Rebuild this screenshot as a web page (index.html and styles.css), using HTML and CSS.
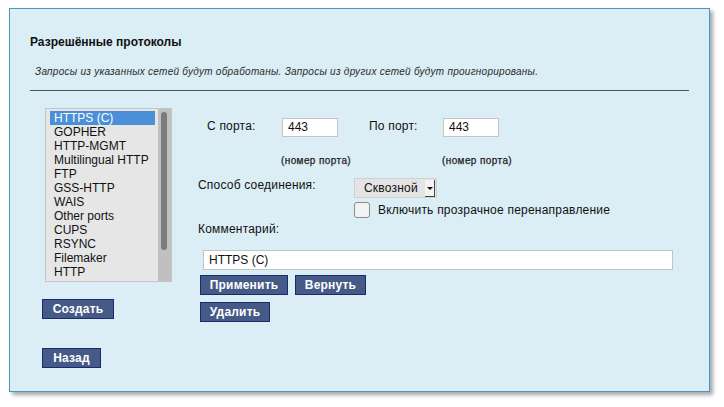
FILE: index.html
```html
<!DOCTYPE html>
<html lang="ru">
<head>
<meta charset="utf-8">
<title>Разрешённые протоколы</title>
<link rel="stylesheet" href="styles.css">
</head>
<body>
<div class="panel">
  <h1 class="title">Разрешённые протоколы</h1>
  <p class="note">Запросы из указанных сетей будут обработаны. Запросы из других сетей будут проигнорированы.</p>
  <div class="rule"></div>
  <div class="main">
    <div class="left">
      <div class="listbox">
        <ul class="list">
          <li class="item selected">HTTPS (C)</li>
          <li class="item">GOPHER</li>
          <li class="item">HTTP-MGMT</li>
          <li class="item">Multilingual HTTP</li>
          <li class="item">FTP</li>
          <li class="item">GSS-HTTP</li>
          <li class="item">WAIS</li>
          <li class="item">Other ports</li>
          <li class="item">CUPS</li>
          <li class="item">RSYNC</li>
          <li class="item">Filemaker</li>
          <li class="item">HTTP</li>
        </ul>
        <div class="scrollbar"><div class="thumb"></div></div>
      </div>
      <button class="btn btn-create">Создать</button>
      <button class="btn btn-back">Назад</button>
    </div>
    <div class="right">
      <div class="ports">
        <span class="lbl">С порта:</span>
        <span class="field small">443</span>
        <span class="lbl">По порт:</span>
        <span class="field small">443</span>
        <span></span>
        <span class="hint">(номер порта)</span>
        <span></span>
        <span class="hint">(номер порта)</span>
      </div>
      <div class="mode">
        <span class="lbl">Способ соединения:</span>
        <div class="mode-ctrls">
          <div class="select"><span class="select-text">Сквозной</span><span class="arrow"></span></div>
          <div class="check-row"><span class="checkbox"></span><span class="check-lbl">Включить прозрачное перенаправление</span></div>
        </div>
      </div>
      <div class="lbl comment-lbl">Комментарий:</div>
      <div class="field wide">HTTPS (C)</div>
      <div class="btn-row">
        <button class="btn btn-apply">Применить</button>
        <button class="btn btn-revert">Вернуть</button>
      </div>
      <div class="btn-row">
        <button class="btn btn-delete">Удалить</button>
      </div>
    </div>
  </div>
</div>
</body>
</html>
```
FILE: styles.css
```css
html, body {
  margin: 0;
  padding: 0;
  background: #ffffff;
}
body {
  font-family: "Liberation Sans", Arial, sans-serif;
  color: #1a1a1a;
  width: 724px;
  height: 407px;
  overflow: hidden;
}
.panel {
  box-sizing: border-box;
  margin: 8px 0 0 9px;
  width: 701px;
  height: 384px;
  background: #dbedf5;
  border: 1px solid #3f9ac4;
  box-shadow: 3px 3px 4px rgba(0, 0, 0, 0.35);
  padding: 26px 0 0 0;
}
.title {
  margin: 0 0 0 20px;
  font-size: 12px;
  line-height: 14px;
  font-weight: bold;
  color: #111;
}
.note {
  margin: 17px 0 0 25px;
  font-size: 10px;
  line-height: 12px;
  font-style: italic;
  letter-spacing: 0.26px;
  color: #2a2a2a;
}
.rule {
  margin: 12px 20px 0 20px;
  height: 1px;
  background: #3d5866;
}
.main {
  display: flex;
  margin-top: 17px;
  padding-left: 32px;
}
.left {
  width: 156px;
  display: flex;
  flex-direction: column;
  align-items: flex-start;
}
.listbox {
  box-sizing: border-box;
  margin-left: 3px;
  width: 127px;
  height: 174px;
  display: flex;
  background: #e6e6e6;
  border: 1px solid #c4c4c4;
}
.list {
  list-style: none;
  margin: 0;
  padding: 2px 3px 0 4px;
  flex: 1;
}
.item {
  font-size: 12px;
  line-height: 14px;
  padding-left: 4px;
  color: #111;
  white-space: nowrap;
}
.item.selected {
  background: #4a8fd8;
  color: #fff;
}
.scrollbar {
  width: 13px;
  background: #c0c0c0;
  padding: 3px 0 0 3px;
  box-sizing: border-box;
}
.thumb {
  width: 6px;
  height: 138px;
  background: #7b7d7d;
  border-radius: 3px;
}
.btn {
  font-family: "Liberation Sans", Arial, sans-serif;
  font-size: 12px;
  font-weight: bold;
  color: #fff;
  background: #465a87;
  border: 1px solid #1b2a6c;
  height: 20px;
  line-height: 18px;
  padding: 0 6px;
  margin: 0;
  box-sizing: border-box;
  letter-spacing: 0.2px;
}
.btn-create {
  margin-top: 17px;
  width: 72px;
}
.btn-back {
  margin-top: 29px;
  width: 59px;
}
.right {
  padding-top: 10px;
  flex: 1;
}
.ports {
  display: grid;
  grid-template-columns: 75px 87px 74px 56px;
  padding-left: 9px;
}
.lbl {
  font-size: 12px;
  line-height: 14px;
  padding-top: 1px;
  letter-spacing: 0.2px;
  color: #111;
}
.field {
  box-sizing: border-box;
  background: #fff;
  border: 1px solid #c4c4c4;
  height: 19px;
  font-size: 12px;
  line-height: 17px;
  padding-left: 5px;
  color: #111;
}
.field.small {
  width: 56px;
}
.hint {
  margin-top: 18px;
  margin-left: -1px;
  font-size: 10px;
  line-height: 11px;
  letter-spacing: 0.4px;
  -webkit-text-stroke: 0.25px #222;
  color: #222;
  white-space: nowrap;
}
.mode {
  display: flex;
  margin-top: 12px;
}
.mode .lbl {
  width: 156px;
  padding-top: 0;
}
.select {
  box-sizing: border-box;
  width: 83px;
  height: 20px;
  background: #e4e4e4;
  border: 1px solid #d0d0d0;
  display: flex;
  align-items: center;
  justify-content: space-between;
  padding: 0 0 0 9px;
}
.select-text {
  font-size: 12px;
  color: #111;
  letter-spacing: 0.2px;
}
.arrow {
  box-sizing: border-box;
  width: 10px;
  height: 17px;
  background: #f2f2f2;
  border-right: 1px solid #444;
  border-bottom: 1px solid #444;
  position: relative;
  margin-right: 1px;
}
.arrow::after {
  content: "";
  position: absolute;
  left: 2px;
  top: 7px;
  border-left: 3px solid transparent;
  border-right: 3px solid transparent;
  border-top: 3px solid #111;
}
.check-row {
  display: flex;
  align-items: center;
  margin-top: 4px;
}
.checkbox {
  box-sizing: border-box;
  width: 16px;
  height: 16px;
  border: 1px solid #8a8a8a;
  border-radius: 3px;
  background: #f3f3f3;
}
.check-lbl {
  margin-left: 8px;
  font-size: 12px;
  line-height: 14px;
  letter-spacing: 0.22px;
  color: #111;
}
.comment-lbl {
  margin-top: 3px;
}
.field.wide {
  margin: 14px 0 0 5px;
  width: 470px;
  height: 20px;
  line-height: 18px;
}
.btn-row {
  display: flex;
  gap: 7px;
  margin-top: 5px;
  margin-left: 2px;
}
.btn-row + .btn-row {
  margin-top: 7px;
}
.btn-apply { width: 88px; }
.btn-revert { width: 71px; }
.btn-delete { width: 70px; }
```
